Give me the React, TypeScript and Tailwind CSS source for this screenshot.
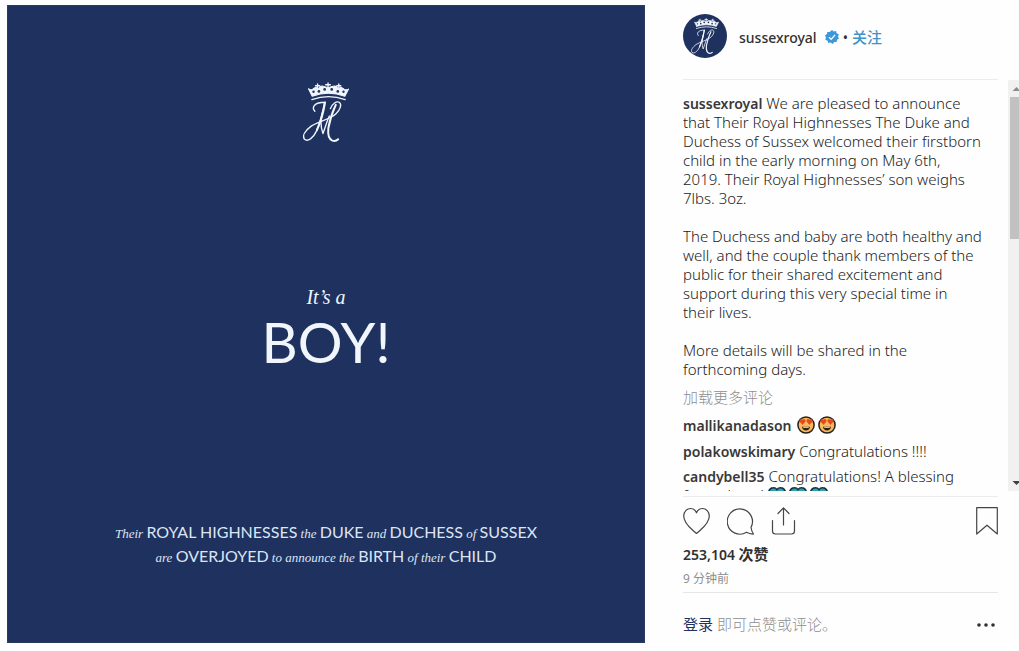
import type { ReactNode } from "react";

const sans = "font-['Noto_Sans','Noto_Sans_CJK_SC',sans-serif]";

function Monogram({ className }: { className: string }) {
  return (
    <svg viewBox="36 34 148 184" className={className} fill="none" stroke="#f1f5fc" strokeLinecap="round" strokeLinejoin="round" aria-hidden="true">
      <path d="M68 89 Q117 72 167 89" strokeWidth="4" />
      <path d="M69 79 L58 57 Q66 63 72 57 L80 52 L88 58 Q92 46 104 50 L116 54 L128 50 Q142 46 146 58 L154 52 L162 57 Q168 63 177 58 L166 79 Q117 62 69 79Z" fill="#f1f5fc" strokeWidth="3" />
      <path d="M116 40 V52 M109 45 H123 M85 43 V54 M79 48 H91 M148 43 V54 M142 48 H154" strokeWidth="4" />
      <g fill="#1f315e" stroke="none">
        <circle cx="73" cy="66" r="3.500" />
        <circle cx="89" cy="65" r="4" />
        <circle cx="106" cy="59" r="4" />
        <circle cx="127" cy="59" r="4" />
        <circle cx="145" cy="65" r="4" />
        <circle cx="162" cy="66" r="3.500" />
      </g>
      <path d="M77 124 C66 112 76 97 106 97 M106 97 C99 133 92 158 82 182 C72 204 56 215 46 207 C38 196 50 180 66 168 C88 153 120 149 139 132 C153 119 158 102 149 97 C141 93 129 101 123 116" strokeWidth="4" />
      <path d="M107 98 C102 130 93 158 83 180 M139 105 C127 130 121 151 117 174 C115 193 119 207 129 211 C136 213 142 211 146 207" strokeWidth="6" />
      <path d="M102 121 C94 142 93 168 101 190 C106 177 111 158 120 138" strokeWidth="4" />
    </svg>
  );
}

function HeartEyes() {
  return (
    <svg viewBox="0 0 18 18" className="inline-block size-[18px] align-[-4px]" role="img" aria-label="Heart eyes">
      <circle cx="9" cy="9" r="8.1" fill="#fdb85c" stroke="#25211c" strokeWidth="1.5" />
      <path d="M5.6 8.5 L2.7 5.5 Q2.5 3 4.5 3.2 L5.6 4 L6.8 3.2 Q8.8 3.4 8 5.7Z M12.4 8.5 L10 5.7 Q9.2 3.4 11.2 3.2 L12.4 4 L13.5 3.2 Q15.5 3 15.3 5.5Z" fill="#e64a1c" stroke="#e64a1c" strokeWidth=".6" />
      <path d="M5 10.8 H13 Q12.4 14.6 9 14.6 Q5.6 14.6 5 10.8Z" fill="#28221e" />
      <path d="M6.2 11.4 H11.8" stroke="#fff" strokeWidth=".8" />
    </svg>
  );
}

function BlueHeart() {
  return (
    <svg viewBox="0 0 18 18" className="inline-block size-[18px] align-[-4px]" role="img" aria-label="Blue heart">
      <path d="M9 16.5 L1.8 9.4 C-.5 6.600 1 2 5 1.800 Q7.700 1.600 9 3.600 Q10.300 1.600 13 1.800 C17 2 18.500 6.600 16.200 9.400Z" fill="#2f9fb5" stroke="#17323a" strokeWidth="1.5" />
    </svg>
  );
}

function Name({ children }: { children: ReactNode }) {
  return <a href="#profile" className="text-sm leading-[19px] font-semibold text-[#383838]">{children}</a>;
}

function Caps({ children }: { children: ReactNode }) {
  return <span className="font-[Lato,sans-serif] text-base leading-none not-italic">{children}</span>;
}

function Announcement() {
  return (
    <section className="flex aspect-square min-w-0 flex-1 flex-col items-center border border-[#2b3a5e] bg-[#1f315e] text-center text-[#f1f5fc]">
      <Monogram className="mt-[75px] h-[62px] w-[50px]" />
      <p className="mt-[142px] font-['Liberation_Serif',serif] text-xl leading-6 italic">It’s a</p>
      <h1 className="mt-[3px] font-[Lato,sans-serif] text-[56px] leading-[60px]">BOY!</h1>
      <p className="mt-[150px] font-['Liberation_Serif',serif] text-[13px] leading-6 italic text-[#dce5f5]">
        Their <Caps>ROYAL HIGHNESSES</Caps> the <Caps>DUKE</Caps> and <Caps>DUCHESS</Caps> of <Caps>SUSSEX</Caps>
        <br />
        are <Caps>OVERJOYED</Caps> to announce the <Caps>BIRTH</Caps> of their <Caps>CHILD</Caps>
      </p>
    </section>
  );
}

function Scrollbar() {
  return (
    <div className="flex w-[11px] flex-col bg-[#f1f1f1]" aria-hidden="true">
      <svg viewBox="0 0 11 17" className="h-[17px] w-[11px]"><path d="M4.500 11 L8.500 7 L12.500 11Z" fill="#8c8c8c" /></svg>
      <div className="ml-[2px] h-[142px] bg-[#c1c1c1]" />
      <svg viewBox="0 0 11 17" className="mt-auto h-[17px] w-[11px]"><path d="M4.500 7 L8.500 11 L12.500 7Z" fill="#404040" /></svg>
    </div>
  );
}

const iconProps = { fill: "none", stroke: "#454545", strokeWidth: 1.2, strokeLinejoin: "round", strokeLinecap: "round" } as const;

export default function App() {
  return (
    <main className={`${sans} flex items-start bg-[#fefefe] pt-[5px] pl-[7px] text-sm leading-[19px] text-[#303030]`}>
      <Announcement />
      <article className="ml-[38px] w-[336px] shrink-0">
        <header className="mr-[21px] flex h-[75px] items-start border-b border-[#ececec] pt-[9px]">
          <div className="flex size-11 items-center justify-center rounded-full bg-[#1f315e]">
            <Monogram className="h-[38px] w-[30px]" />
          </div>
          <div className="ml-3 flex h-[46px] items-center">
            <a href="#profile" className="font-medium">sussexroyal</a>
            <svg viewBox="0 0 14 14" className="ml-2 size-[14px]" role="img" aria-label="Verified">
              <path d="M7 0 L8.700 1.500 L11 1 L11.600 3.200 L13.800 4.200 L13 6.500 L14 8.600 L12 9.800 L11.600 12 L9.300 12.100 L7.600 13.900 L5.700 12.500 L3.300 12.900 L2.600 10.700 L.3 9.800 L1 7.500 L0 5.400 L2 4.100 L2.300 1.900 L4.600 1.900Z" fill="#3d97db" />
              <path d="M4 7.200 L6.200 9.300 L10 4.800" fill="none" stroke="#fff" strokeWidth="1.300" />
            </svg>
            <span className="ml-1">•</span>
            <button type="button" className="ml-1 text-[15px] font-medium text-[#3f93c8]">关注</button>
          </div>
        </header>

        <div className="flex h-[411px]">
          <div className="min-w-0 flex-1 overflow-hidden pt-[14px] pr-[20px] text-[15px] font-light text-[#1c1c1c]">
            <p>
              <Name>sussexroyal</Name> We are pleased to announce<br />
              that Their Royal Highnesses The Duke and<br />
              Duchess of Sussex welcomed their firstborn<br />
              child in the early morning on May 6th,<br />
              2019. Their Royal Highnesses’ son weighs<br />
              7lbs. 3oz.
            </p>
            <p className="mt-[19px]">
              The Duchess and baby are both healthy and<br />
              well, and the couple thank members of the<br />
              public for their shared excitement and<br />
              support during this very special time in<br />
              their lives.
            </p>
            <p className="mt-[19px]">
              More details will be shared in the<br />
              forthcoming days.
            </p>
            <button type="button" className="mt-[9px] block text-[15px] font-light text-[#8e8e8e]">加载更多评论</button>
            <ul className="mt-[9px] flex flex-col gap-[6px]">
              <li className="h-5"><Name>mallikanadason</Name> <span className="ml-[2px] inline-flex gap-[3px] align-top"><HeartEyes /><HeartEyes /></span></li>
              <li><Name>polakowskimary</Name> Congratulations !!!!</li>
              <li>
                <Name>candybell35</Name> Congratulations! A blessing<br />
                from above! <span className="inline-flex gap-[3px] align-top"><BlueHeart /><BlueHeart /><BlueHeart /></span>
              </li>
            </ul>
          </div>
          <Scrollbar />
        </div>

        <footer className="mt-[5px] mr-[21px] border-t border-[#ececec]">
          <div className="flex items-center gap-4 pt-[10px]">
            <button type="button" aria-label="Like"><svg viewBox="0 0 28 28" className="size-7" {...iconProps}><path d="M13.500 26.500 L10 23.500 C6 20 .7 14.500 .7 9 C.7 4.500 4 1.500 7.500 1.500 C10.500 1.500 12.500 3.500 13.500 5.800 C14.500 3.500 16.500 1.500 19.500 1.500 C23 1.500 26.300 4.500 26.300 9 C26.300 14.500 21 20 17 23.500Z" /></svg></button>
            <button type="button" aria-label="Comment"><svg viewBox="0 0 28 28" className="size-7" {...iconProps}><path d="M24 20.500 A12.600 12.600 0 1 0 19.500 25.300 Q23 27.300 26.500 27 Q24.500 24 24 20.500Z" /></svg></button>
            <button type="button" aria-label="Share"><svg viewBox="0 0 28 28" className="size-7" {...iconProps}><path d="M1.500 13.500 V24 Q1.500 27 4.500 27 H20.500 Q23.500 27 23.500 24 V13.500 M12.500 18 V1 M7 6.500 L12.500 .8 L18 6.500" /></svg></button>
            <button type="button" aria-label="Save" className="ml-auto"><svg viewBox="0 0 22 28" className="h-7 w-[22px]" {...iconProps}><path d="M.7 .7 H21.300 V27 L11 18.200 L.7 27Z" /></svg></button>
          </div>
          <p className="mt-[10px] font-semibold">253,104 <span className="text-[15px]">次赞</span></p>
          <p className="mt-[6px] text-xs leading-[18px] text-[#8e8e8e]">9 分钟前</p>
          <div className="mt-[4px] flex items-center justify-between border-t border-[#e6e6e6] pt-[22px] text-[15px]">
            <p className="font-light text-[#8e8e8e]"><a href="#login" className="font-normal text-[#1f315e]">登录</a> 即可点赞或评论。</p>
            <button type="button" aria-label="More options"><svg viewBox="0 0 20 6" className="mr-[2px] h-[6px] w-5"><g fill="#303030"><circle cx="3" cy="3" r="1.800" /><circle cx="10" cy="3" r="1.800" /><circle cx="17" cy="3" r="1.800" /></g></svg></button>
          </div>
        </footer>
      </article>
    </main>
  );
}
